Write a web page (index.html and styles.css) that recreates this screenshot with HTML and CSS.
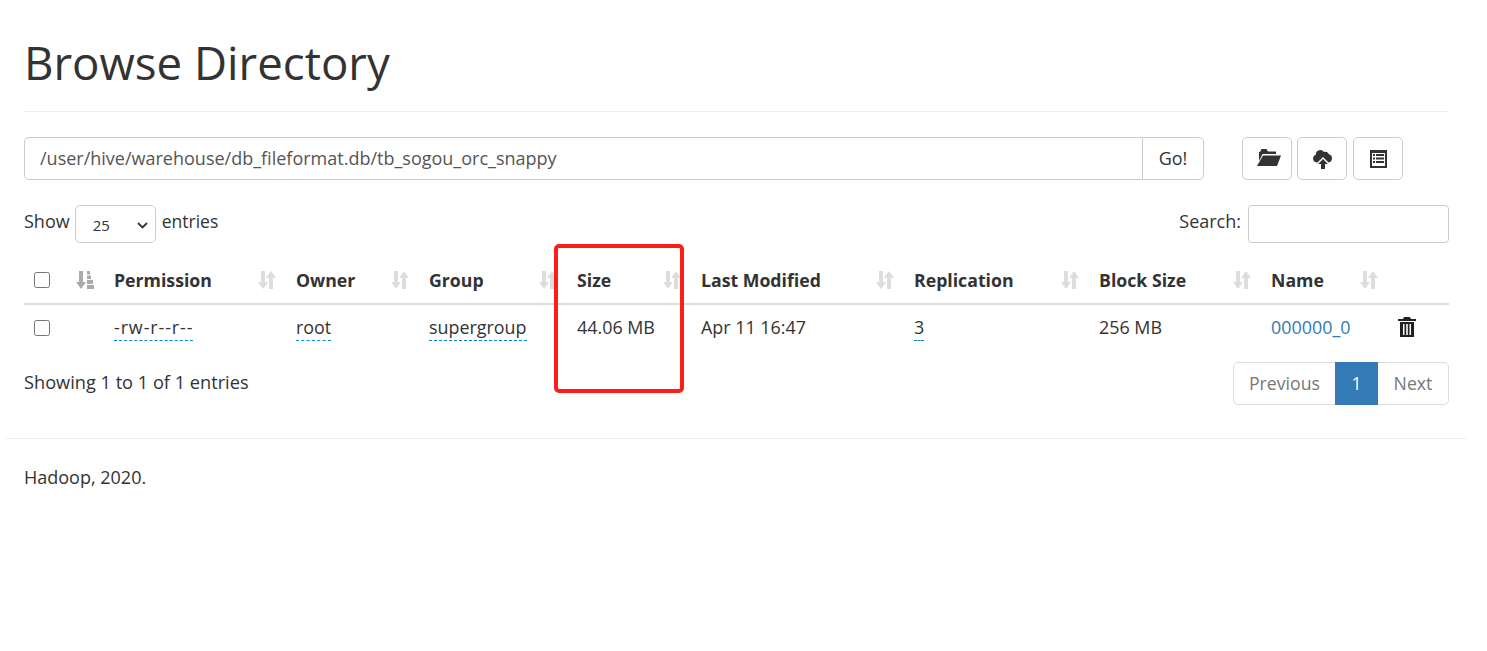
FILE: index.html
```html
<!DOCTYPE html>
<html lang="en">
<head>
    <meta charset="UTF-8">
    <title>Browsing HDFS</title>
    <link rel="stylesheet" href="styles.css">
</head>
<body>
    <svg class="icon-defs" width="0" height="0">
        <defs>
            <symbol id="sort" viewBox="0 0 18 20">
                <path d="M3 1h4v11h3l-5 7-5-7h3z"/>
                <path d="M13 1l5 7h-3v11h-4V8H8z"/>
            </symbol>
            <symbol id="sort-asc" viewBox="0 0 18 20">
                <path d="M3 1h4v11h3l-5 7-5-7h3z"/>
                <path d="M11 1h3v3.500h-3zM11 5.500h4V9h-4zM11 10h6v4h-6zM11 15h7v4h-7z"/>
            </symbol>
        </defs>
    </svg>

    <div class="container">
        <h1 class="page-title">Browse Directory</h1>

        <div class="toolbar">
            <div class="path-group">
                <input class="path-input" type="text" value="/user/hive/warehouse/db_fileformat.db/tb_sogou_orc_snappy">
                <button class="go-btn">Go!</button>
            </div>
            <div class="tool-btns">
                <button class="tool-btn tool-btn-folder">
                    <svg width="24" height="17" viewBox="0 0 24 17"><path d="M3 3l1.500-3h5L11 2.500h8V5H5.500L2 12V3z"/><path d="M6 6.500h18L20 17H0z"/></svg>
                </button>
                <button class="tool-btn tool-btn-cloud">
                    <svg width="20" height="20" viewBox="0 0 20 20"><path d="M4.500 13.500H4A4 4 0 0 1 2.800 5.700 4.500 4.500 0 0 1 11 3a3.500 3.500 0 0 1 4.800 2.300 4.200 4.200 0 0 1-.3 8.200L10 8z"/><path d="M10 10l5 5h-3v5H8v-5H5z"/></svg>
                </button>
                <button class="tool-btn">
                    <svg width="17" height="18" viewBox="0 0 17 18"><path fill-rule="evenodd" d="M0 0h17v18H0zM2 3v13h13V3z"/><path d="M3 4h2v2H3zM6 4h8v2H6zM3 7.500h2v2H3zM6 7.500h8v2H6zM3 11h2v2H3zM6 11h8v2H6z"/></svg>
                </button>
            </div>
        </div>

        <div class="table-controls">
            <label class="length-label">Show
                <span class="length-select">25
                    <svg width="11" height="7" viewBox="0 0 11 7"><path d="M1 1l4.500 4.500L10 1" fill="none" stroke="#333" stroke-width="1.800"/></svg>
                </span>
                <span class="length-suffix">entries</span></label>
            <label class="search-label">Search: <input class="search-input" type="text"></label>
        </div>

        <table class="file-table">
            <thead>
                <tr>
                    <th class="col-check"><input class="check" type="checkbox"></th>
                    <th class="col-sort"><svg class="sort-icon sort-icon-active"><use href="#sort-asc"/></svg></th>
                    <th class="col-perm">Permission<svg class="sort-icon"><use href="#sort"/></svg></th>
                    <th class="col-owner">Owner<svg class="sort-icon"><use href="#sort"/></svg></th>
                    <th class="col-group">Group<svg class="sort-icon"><use href="#sort"/></svg></th>
                    <th class="col-size">Size<svg class="sort-icon"><use href="#sort"/></svg></th>
                    <th class="col-date">Last Modified<svg class="sort-icon"><use href="#sort"/></svg></th>
                    <th class="col-repl">Replication<svg class="sort-icon"><use href="#sort"/></svg></th>
                    <th class="col-block">Block Size<svg class="sort-icon"><use href="#sort"/></svg></th>
                    <th class="col-name">Name<svg class="sort-icon"><use href="#sort"/></svg></th>
                    <th class="col-action"></th>
                </tr>
            </thead>
            <tbody>
                <tr>
                    <td class="col-check"><input class="check" type="checkbox"></td>
                    <td class="col-sort"></td>
                    <td><span class="editable editable-perm">-rw-r--r--</span></td>
                    <td><span class="editable">root</span></td>
                    <td><span class="editable">supergroup</span></td>
                    <td>44.06 MB</td>
                    <td>Apr 11 16:47</td>
                    <td><span class="editable">3</span></td>
                    <td>256 MB</td>
                    <td><a class="file-link" href="#">000000_0</a></td>
                    <td class="trash-cell">
                        <svg width="18" height="20" viewBox="0 0 18 20"><path d="M6 0h6l1 2h5v2H0V2h5z"/><path fill-rule="evenodd" d="M2 5h14v15H2zM5 7v11h1.500V7zM8.200 7v11h1.600V7zM11.500 7v11H13V7z"/></svg>
                    </td>
                </tr>
            </tbody>
        </table>

        <div class="table-footer">
            <div class="table-info">Showing 1 to 1 of 1 entries</div>
            <div class="pagination">
                <a class="page-item page-prev" href="#">Previous</a>
                <a class="page-item page-active" href="#">1</a>
                <a class="page-item page-next" href="#">Next</a>
            </div>
        </div>
    </div>

    <div class="page-footer">
        <p>Hadoop, 2020.</p>
    </div>

    <div class="highlight-box"></div>
</body>
</html>
```

FILE: styles.css
```css
* {
    box-sizing: border-box;
}

body {
    font-family: "Open Sans", "Noto Sans", sans-serif;
    font-size: 18px;
    color: #333;
    margin: 0;
    background-color: #fff;
}

.icon-defs {
    position: absolute;
}

.container {
    padding: 0 38px 0 24px;
}

.page-title {
    font-size: 45.6px;
    font-weight: 400;
    line-height: 50px;
    margin: 0;
    padding: 37px 0 22px;
    height: 112px;
    border-bottom: 1px solid #eee;
}

.toolbar {
    display: flex;
    margin-top: 25px;
    height: 43px;
}

.path-group {
    display: flex;
    width: 1180px;
}

.path-input {
    flex: 1;
    font: inherit;
    color: #555;
    padding: 0 15px 2px;
    border: 1px solid #ccc;
    border-right: none;
    border-radius: 5px 0 0 5px;
}

.go-btn {
    width: 62px;
    font: inherit;
    color: #333;
    background-color: #fff;
    padding: 0 0 2px;
    border: 1px solid #ccc;
    border-radius: 0 5px 5px 0;
}

.tool-btns {
    display: flex;
    gap: 5px;
    margin-left: 38px;
}

.tool-btn {
    width: 50px;
    height: 43px;
    padding: 0;
    background-color: #fff;
    border: 1px solid #ccc;
    border-radius: 5px;
    display: flex;
    align-items: center;
    justify-content: center;
}

.tool-btn:last-child {
    margin-left: 1px;
}

.tool-btn svg {
    fill: #333;
}

.tool-btn-folder svg {
    margin: -3px 0 0 4px;
}

.tool-btn-cloud svg {
    margin-left: 2px;
}

.table-controls {
    display: flex;
    justify-content: space-between;
    align-items: center;
    margin-top: 25px;
    height: 38px;
}

.length-label {
    display: flex;
    align-items: flex-start;
    gap: 6px;
    line-height: 32px;
}

.length-select {
    width: 81px;
    height: 38px;
    font-size: 15px;
    line-height: 38px;
    margin-left: -1px;
    padding: 2px 17px 0;
    border: 1px solid #ccc;
    border-radius: 5px;
    display: flex;
    align-items: center;
    justify-content: space-between;
}

.length-select svg {
    margin-right: -10px;
}

.length-suffix {
    font-size: 17.5px;
}

.search-label {
    display: flex;
    align-items: flex-start;
    gap: 7px;
    line-height: 32px;
}

.search-input {
    width: 201px;
    height: 38px;
    border: 1px solid #ccc;
    border-radius: 4px;
}

.file-table {
    width: 1425px;
    table-layout: fixed;
    border-collapse: collapse;
    margin-top: 16px;
    font-size: 17.9px;
}

.file-table th {
    position: relative;
    text-align: left;
    font-size: 17.7px;
    font-weight: 700;
    height: 45px;
    padding: 0 8px 3px;
    border-bottom: 2px solid #ddd;
}

.file-table td {
    height: 48px;
    padding: 0 8px 4px;
}

.col-check { width: 44px; padding-left: 10px !important; }
.col-sort { width: 38px; }
.col-perm { width: 182px; }
.col-owner { width: 133px; }
.col-group { width: 148px; }
.col-size { width: 124px; }
.col-date { width: 213px; }
.col-repl { width: 185px; }
.col-block { width: 172px; }
.col-name { width: 127px; }
.col-action { width: 59px; }

.check {
    width: 16px;
    height: 16px;
    margin: 0;
    vertical-align: middle;
}

th .check {
    margin-bottom: 4px;
}

td .check {
    margin-bottom: 2px;
}

.sort-icon {
    position: absolute;
    right: 12px;
    top: 11px;
    width: 18px;
    height: 20px;
    fill: #ddd;
}

.sort-icon-active {
    right: 12px;
    fill: #aaa;
}

.editable {
    border-bottom: 1px dashed #08c;
    padding-bottom: 1px;
}

/* dashes are narrow in this font, the reference runs 79px */
.editable-perm {
    letter-spacing: 0.9px;
}

.file-link {
    color: #337ab7;
    text-decoration: none;
}

.trash-cell svg {
    fill: #222;
    vertical-align: middle;
    margin: -3px 0 0 0;
}

.table-footer {
    display: flex;
    justify-content: space-between;
    align-items: flex-start;
    margin-top: 10px;
}

.table-info {
    font-size: 18.2px;
    padding-top: 8px;
}

.pagination {
    display: flex;
    height: 43px;
    border: 1px solid #ddd;
    border-radius: 5px;
    font-size: 17.7px;
}

.page-item {
    color: #777;
    text-decoration: none;
    display: flex;
    align-items: center;
    justify-content: center;
    padding-bottom: 1px;
}

.page-prev {
    width: 101px;
}

.page-next {
    width: 70px;
}

.page-active {
    width: 43px;
    color: #fff;
    background-color: #337ab7;
    margin: -1px 0;
}

.page-footer {
    margin: 33px 20px 0 5px;
    border-top: 1px solid #eee;
    padding: 26px 19px 0;
}

.page-footer p {
    margin: 0;
}

/* red annotation drawn over the screenshot */
.highlight-box {
    position: absolute;
    left: 554px;
    top: 244px;
    width: 130px;
    height: 149px;
    border: 4px solid #fb1f17;
    border-radius: 5px;
}
```
